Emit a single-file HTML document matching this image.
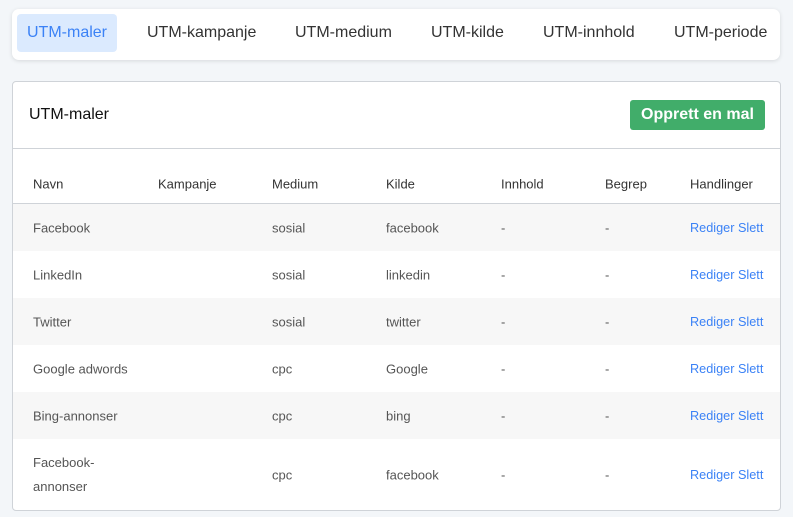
<!DOCTYPE html>
<html><head><meta charset="utf-8"><style>
body{margin:0;background:#f3f6f9;font-family:"Liberation Sans",sans-serif;width:793px;height:517px;overflow:hidden;position:relative}
.nav{position:absolute;left:12px;top:9px;width:768px;height:51px;background:#fff;border-radius:7px;box-shadow:0 1px 4px rgba(0,0,0,.12)}
.tab{position:absolute;top:5px;height:38px;line-height:38px;font-size:16px;color:#333}
.tab.a{background:#dbeafe;color:#3b82f6;border-radius:4px;padding:0 10px;left:5px;width:80px}
.card{position:absolute;left:12px;top:81px;width:767px;height:428px;background:#fff;border:1px solid #cfd3d8;border-radius:4px;overflow:hidden}
.title{position:absolute;left:16px;top:24px;font-size:16px;color:#111}
.btn{position:absolute;left:617px;top:18px;width:135px;height:30px;background:#41ad6a;color:#fff;font-weight:bold;font-size:16px;line-height:30px;text-align:center;border-radius:3px}
.hl{position:absolute;left:0;top:66px;width:100%;border-top:1px solid #cfd3d8}
.row{position:absolute;left:0;width:100%;font-size:13px;color:#555}
.row span{position:absolute;top:50%;transform:translateY(-50%)}
.hd{top:67px;height:54px;border-bottom:1px solid #cfd3d8;color:#333}
.hd span{top:35px}
.g{background:#f7f7f7}
.lk{color:#3b82f6;font-size:12.7px}
</style></head><body>
<div class="nav">
<div class="tab a">UTM-maler</div>
<div class="tab" style="left:135px">UTM-kampanje</div>
<div class="tab" style="left:283px">UTM-medium</div>
<div class="tab" style="left:419px">UTM-kilde</div>
<div class="tab" style="left:531px">UTM-innhold</div>
<div class="tab" style="left:662px">UTM-periode</div>
</div>
<div class="card">
<div class="title">UTM-maler</div>
<div class="btn">Opprett en mal</div>
<div class="hl"></div>
<div class="row hd"><span style="left:20px">Navn</span><span style="left:145px">Kampanje</span><span style="left:259px">Medium</span><span style="left:373px">Kilde</span><span style="left:488px">Innhold</span><span style="left:592px">Begrep</span><span style="left:677px">Handlinger</span></div>
<div class="row g" style="top:122px;height:47px"><span style="left:20px">Facebook</span><span style="left:259px">sosial</span><span style="left:373px">facebook</span><span style="left:488px">-</span><span style="left:592px">-</span><span style="left:677px" class="lk">Rediger Slett</span></div>
<div class="row" style="top:169px;height:47px"><span style="left:20px">LinkedIn</span><span style="left:259px">sosial</span><span style="left:373px">linkedin</span><span style="left:488px">-</span><span style="left:592px">-</span><span style="left:677px" class="lk">Rediger Slett</span></div>
<div class="row g" style="top:216px;height:47px"><span style="left:20px">Twitter</span><span style="left:259px">sosial</span><span style="left:373px">twitter</span><span style="left:488px">-</span><span style="left:592px">-</span><span style="left:677px" class="lk">Rediger Slett</span></div>
<div class="row" style="top:263px;height:47px"><span style="left:20px">Google adwords</span><span style="left:259px">cpc</span><span style="left:373px">Google</span><span style="left:488px">-</span><span style="left:592px">-</span><span style="left:677px" class="lk">Rediger Slett</span></div>
<div class="row g" style="top:310px;height:47px"><span style="left:20px">Bing-annonser</span><span style="left:259px">cpc</span><span style="left:373px">bing</span><span style="left:488px">-</span><span style="left:592px">-</span><span style="left:677px" class="lk">Rediger Slett</span></div>
<div class="row" style="top:357px;height:71px"><span style="left:20px;line-height:24px">Facebook-<br>annonser</span><span style="left:259px">cpc</span><span style="left:373px">facebook</span><span style="left:488px">-</span><span style="left:592px">-</span><span style="left:677px" class="lk">Rediger Slett</span></div>
</div>
</body></html>
